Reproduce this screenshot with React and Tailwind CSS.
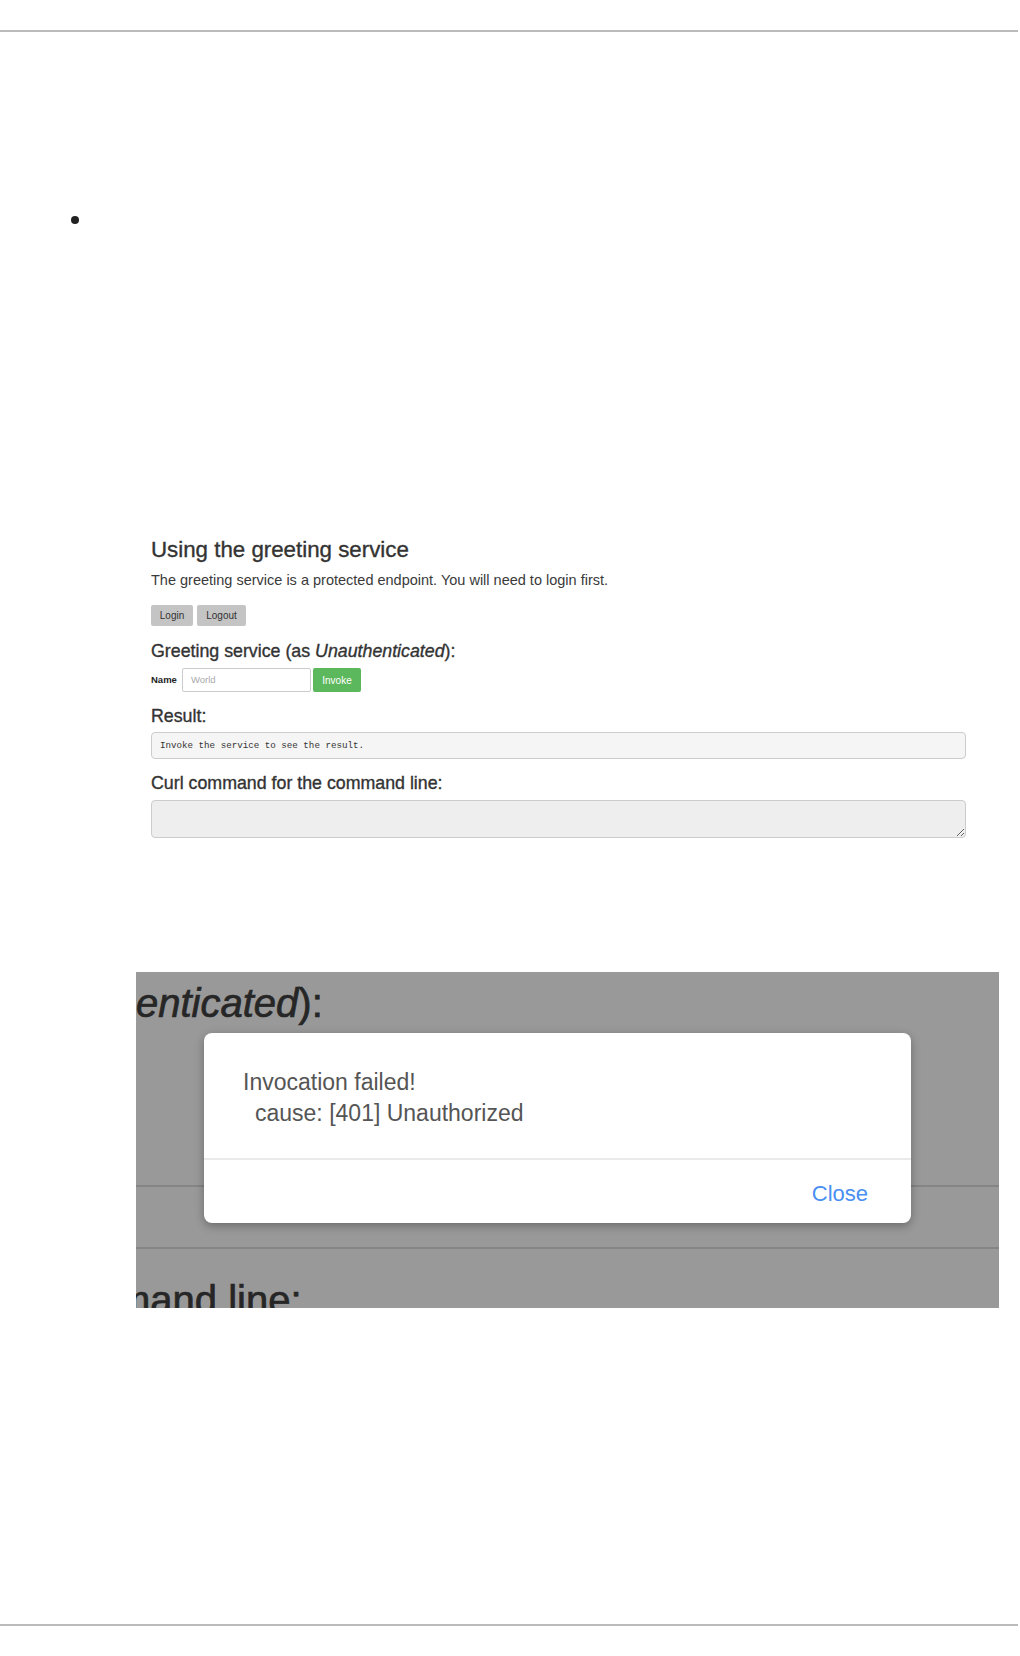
const sans = "font-['Liberation_Sans',Arial,sans-serif]"
const medium = "[-webkit-text-stroke:0.35px_currentColor]"

const ServicePanel = () => {
    return (
        <div className={`ml-[151px] w-[815px] text-[#333] ${sans}`}>
            <h3 className={`text-[22.3px] leading-[26px] ${medium}`}>Using the greeting service</h3>
            <p className="mt-[8px] text-[14.5px] leading-[18px] text-[#3a3a3a]">
                The greeting service is a protected endpoint. You will need to login first.
            </p>
            <div className="mt-[16px] flex gap-[4px]">
                <button className="h-[21px] w-[42px] rounded-[2px] bg-[#c4c4c4] text-[10px] text-[#333]">Login</button>
                <button className="h-[21px] w-[49px] rounded-[2px] bg-[#c4c4c4] text-[10px] text-[#333]">Logout</button>
            </div>
            <h4 className={`mt-[14px] text-[17.8px] leading-[22px] ${medium}`}>
                Greeting service (as <i>Unauthenticated</i>):
            </h4>
            <div className="mt-[6px] flex items-center">
                <span className="w-[31px] text-[9.5px] font-bold text-[#222]">Name</span>
                <div className="flex h-[24px] w-[129px] items-center rounded-[2px] border border-[#ccc] bg-white pl-[8px] text-[9.5px] text-[#aaa]">
                    World
                </div>
                <button className="ml-[2px] h-[24px] w-[48px] rounded-[2px] bg-[#5cb85c] text-[10px] text-white">Invoke</button>
            </div>
            <h4 className={`mt-[13px] text-[17.8px] leading-[22px] ${medium}`}>Result:</h4>
            <div className="mt-[5px] flex h-[27px] items-center rounded-[4px] border border-[#ccc] bg-[#f5f5f5] px-[8px] font-['Liberation_Mono',monospace] text-[9.2px] text-[#333]">
                Invoke the service to see the result.
            </div>
            <h4 className={`mt-[13px] text-[17.8px] leading-[22px] ${medium}`}>Curl command for the command line:</h4>
            <textarea
                readOnly
                className="mt-[6px] block h-[38px] w-full rounded-[4px] border border-[#ccc] bg-[#eee] outline-none"
            />
        </div>
    )
}

const ErrorShot = () => {
    return (
        <div className={`relative ml-[136px] mt-[134px] h-[336px] w-[863px] overflow-hidden bg-[#999] ${sans}`}>
            {/* zoomed page behind the dialog */}
            <div className="pt-[7px] text-[40px] leading-[48px] text-[#262626] [-webkit-text-stroke:0.7px_#262626]">
                <i>enticated</i>):
            </div>
            <div className="mt-[158px] h-[2px] bg-[#858585]" />
            <div className="mt-[60px] h-[2px] bg-[#858585]" />
            <div className="mt-[27px] -ml-[19px] whitespace-nowrap text-[40px] leading-[48px] text-[#262626] [-webkit-text-stroke:0.7px_#262626]">
                mand line:
            </div>

            {/* dialog */}
            <div className="absolute left-[68px] top-[61px] w-[707px] rounded-[8px] bg-white shadow-[0_3px_10px_rgba(0,0,0,0.3)]">
                <div className="px-[39px] pt-[34px] pb-[29px] text-[23px] leading-[31px] text-[#555]">
                    <div>Invocation failed!</div>
                    <div className="pl-[12px]">cause: [401] Unauthorized</div>
                </div>
                <div className="h-[2px] bg-[#eaeaea]" />
                <div className="flex h-[63px] items-center justify-end pr-[43px] pt-[4px]">
                    <span className="text-[22px] text-[#4a8ff2]">Close</span>
                </div>
            </div>
        </div>
    )
}

const App = () => {
    return (
        <div className="min-h-[1656px] w-[1020px] bg-white">
            <div className="h-[30px]" />
            <div className="h-[2px] w-[1018px] bg-[#bbb]" />
            <div className="ml-[71px] mt-[184px] h-[8px] w-[8px] rounded-full bg-[#222]" />
            <div className="h-[313px]" />
            <ServicePanel />
            <ErrorShot />
            <div className="mt-[316px] h-[2px] w-[1018px] bg-[#bbb]" />
        </div>
    )
}

export default App
